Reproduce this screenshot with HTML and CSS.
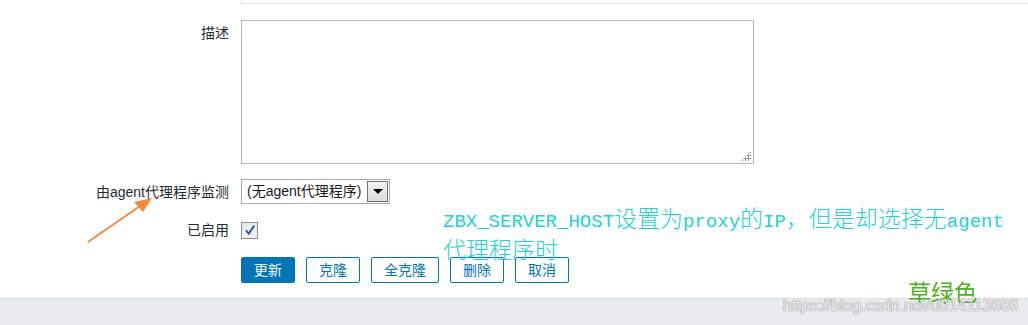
FILE: index.html
```html
<!DOCTYPE html>
<html lang="zh">
<head>
<meta charset="utf-8">
<link rel="stylesheet" href="styles.css">
</head>
<body>
<div class="page">
  <div class="main">
    <div class="topbox-row"><div class="topbox"></div></div>
    <div class="row row-desc">
      <label class="lbl lbl-desc">描述</label>
      <div class="textarea"><span class="grip"></span></div>
    </div>
    <div class="row row-proxy">
      <label class="lbl">由agent代理程序监测</label>
      <div class="select">
        <span class="select-text">(无agent代理程序)</span>
        <span class="select-btn"><span class="tri"></span></span>
      </div>
    </div>
    <div class="row row-enabled">
      <label class="lbl">已启用</label>
      <span class="checkbox">
        <svg width="14" height="14" viewBox="0 0 14 14"><path d="M3 7.5 L5.8 10.6 L11.2 2.6" fill="none" stroke="#3d5aa8" stroke-width="2"/></svg>
      </span>
    </div>
    <div class="row row-buttons">
      <span class="lbl"></span>
      <div class="buttons">
        <button class="btn btn-primary">更新</button>
        <button class="btn">克隆</button>
        <button class="btn">全克隆</button>
        <button class="btn">删除</button>
        <button class="btn">取消</button>
      </div>
    </div>
  </div>
  <div class="footer"></div>

  <svg class="arrow" width="80" height="60" viewBox="0 0 80 60">
    <line x1="8" y1="47" x2="63" y2="9" stroke="#f58a3c" stroke-width="2"/>
    <polygon points="72,3 54,7 63,17" fill="#f58a3c"/>
  </svg>
  <div class="note">
    <span class="lat">ZBX_SERVER_HOST</span>设置为<span class="lat">proxy</span>的<span class="lat">IP</span>，但是却选择无<span class="lat">agent</span><br>代理程序时
  </div>
  <div class="green">草绿色</div>
  <div class="watermark">https://blog.csdn.net/u014113686</div>
</div>
</body>
</html>
```

FILE: styles.css
```css
html, body {
  margin: 0;
  padding: 0;
  background: #fff;
}
body {
  width: 1028px;
  height: 325px;
  overflow: hidden;
  font-family: "Liberation Sans", "Noto Sans CJK SC", sans-serif;
  font-size: 14px;
  color: #1f2c33;
}
.page {
  position: relative;
  width: 1028px;
  height: 325px;
  display: flex;
  flex-direction: column;
}
.main {
  flex: 1;
  display: flex;
  flex-direction: column;
}
.topbox-row {
  padding-left: 241px;
}
.topbox {
  height: 3px;
  border-left: 1px solid #e3e3e3;
  border-bottom: 1px solid #e3e3e3;
}
.row {
  display: flex;
  align-items: flex-start;
}
.lbl {
  width: 229px;
  padding-right: 12px;
  text-align: right;
  line-height: 18px;
  flex: none;
  white-space: nowrap;
}
.row-desc {
  margin-top: 16px;
}
.lbl-desc {
  padding-top: 4px;
}
.textarea {
  position: relative;
  width: 511px;
  height: 142px;
  border: 1px solid #adbbc6;
  background: #fff;
}
.grip {
  position: absolute;
  right: 2px;
  bottom: 2px;
  width: 10px;
  height: 10px;
  background:
    radial-gradient(circle, #9a9a9a 0 1px, transparent 1.3px) 0 0 / 3px 3px;
  clip-path: polygon(100% 0, 100% 100%, 0 100%);
}
.row-proxy {
  margin-top: 15px;
  align-items: center;
}
.select {
  display: flex;
  align-items: stretch;
  width: 147px;
  height: 23px;
  border: 1px solid #a5acb2;
  background: #fff;
}
.select-text {
  flex: 1;
  padding-left: 5px;
  line-height: 23px;
  font-size: 14px;
  color: #1a1a1a;
  white-space: nowrap;
  overflow: hidden;
}
.select-btn {
  width: 19px;
  margin: 1px;
  border: 1px solid #707070;
  background: linear-gradient(#f3f3f3, #dcdcdc);
  display: flex;
  align-items: center;
  justify-content: center;
}
.tri {
  width: 0;
  height: 0;
  border-left: 5px solid transparent;
  border-right: 5px solid transparent;
  border-top: 5px solid #000;
}
.row-enabled {
  margin-top: 17px;
  align-items: center;
}
.checkbox {
  width: 15px;
  height: 15px;
  border: 1px solid #8f8f8f;
  background: linear-gradient(#e8e8e8, #f4f4f4);
  display: flex;
  align-items: center;
  justify-content: center;
}
.row-buttons {
  margin-top: 18px;
}
.buttons {
  display: flex;
  gap: 11px;
}
.btn {
  height: 26px;
  padding: 0 12px;
  border: 1px solid #0275b8;
  border-radius: 2px;
  background: #fff;
  color: #0275b8;
  font-family: "Liberation Sans", "Noto Sans CJK SC", sans-serif;
  font-size: 14px;
  line-height: 24px;
  cursor: pointer;
}
.btn-primary {
  background: #0275b8;
  color: #fff;
}
.footer {
  height: 26px;
  border-top: 1px solid #d9dde1;
  background: #e9ecef;
}
.arrow {
  position: absolute;
  left: 80px;
  top: 195px;
}
.note {
  position: absolute;
  left: 443px;
  top: 204px;
  font-family: "Noto Sans CJK SC", sans-serif;
  font-size: 23px;
  font-weight: 300;
  line-height: 26px;
  color: #22d2d6;
  white-space: nowrap;
}
.note .lat {
  font-family: "Liberation Mono", monospace;
  font-size: 19px;
  font-weight: 400;
}
.green {
  position: absolute;
  left: 908px;
  top: 279px;
  font-family: "Noto Sans CJK SC", sans-serif;
  font-size: 23px;
  line-height: 24px;
  color: #4fb21c;
}
.watermark {
  position: absolute;
  left: 783px;
  top: 296px;
  font-family: "Liberation Sans", sans-serif;
  font-size: 16px;
  line-height: 19px;
  color: rgba(250, 250, 250, 0.95);
  text-shadow: 0 0 1px rgba(90, 90, 90, 0.8), 0 0 1px rgba(90, 90, 90, 0.5);
  white-space: nowrap;
}
```
